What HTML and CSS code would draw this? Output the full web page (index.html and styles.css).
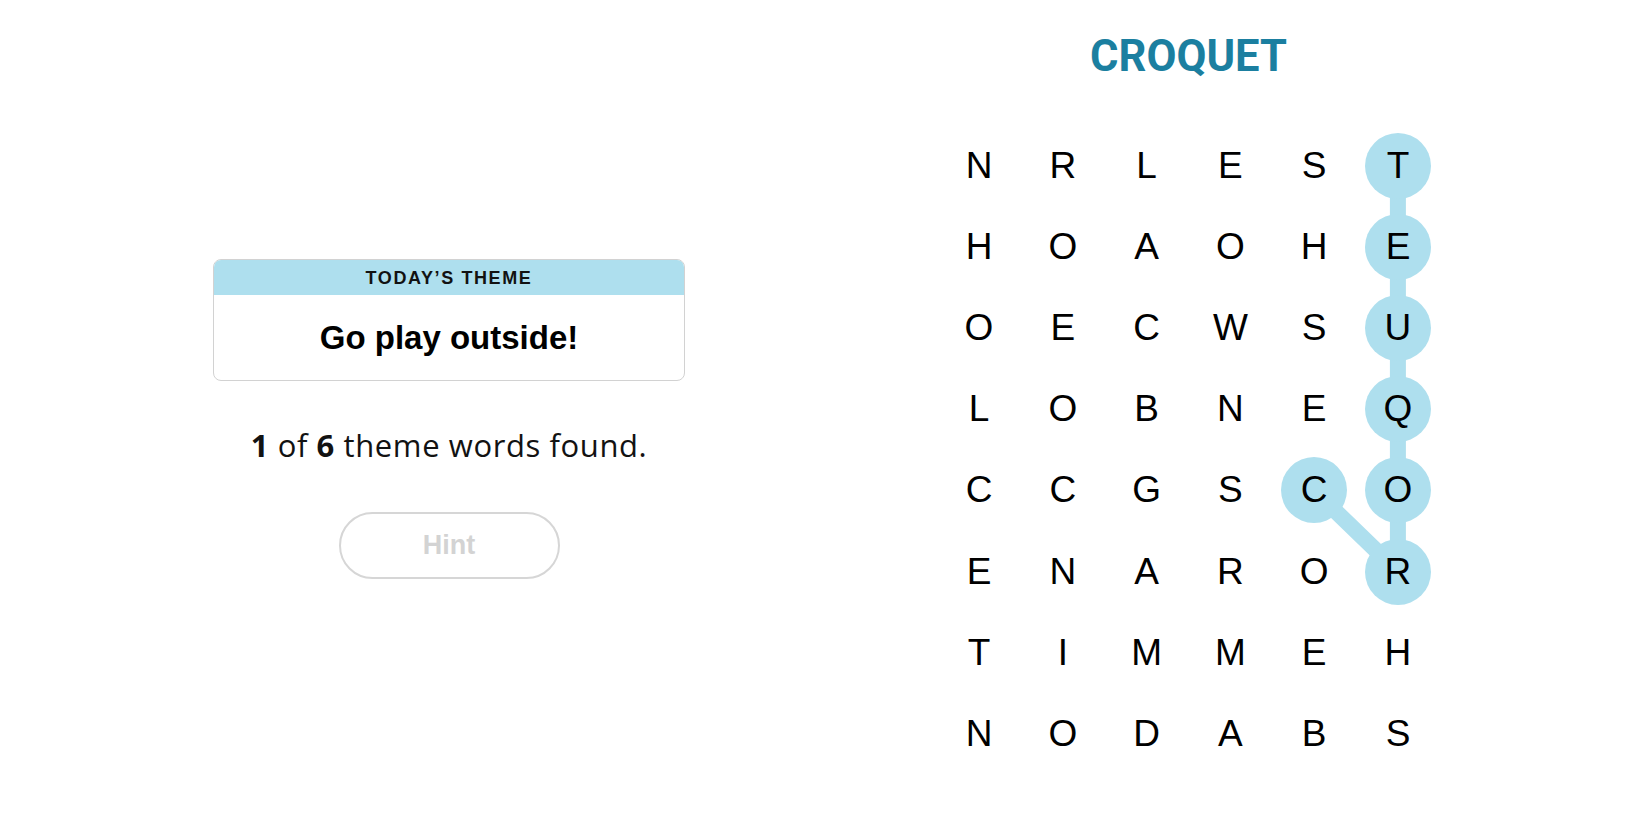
FILE: index.html
```html
<!DOCTYPE html>
<html lang="en">
<head>
<meta charset="utf-8">
<title>Strands</title>
<link rel="stylesheet" href="styles.css">
</head>
<body>
<main class="page">
  <section class="left">
    <div class="theme-card">
      <div class="theme-head">TODAY’S THEME</div>
      <div class="theme-body">Go play outside!</div>
    </div>
    <p class="progress"><b>1</b> of <b>6</b> theme words found.</p>
    <button class="hint" type="button">Hint</button>
  </section>
  <section class="right">
    <h1 class="word">CROQUET</h1>
    <div class="board">
      <svg class="links" width="503" height="650" viewBox="0 0 503 650" aria-hidden="true">
        <line x1="460.9" y1="40.6" x2="460.9" y2="446.6" stroke="#aedfee" stroke-width="16" stroke-linecap="round"/>
        <line x1="377.1" y1="365.4" x2="460.9" y2="446.6" stroke="#aedfee" stroke-width="16" stroke-linecap="round"/>
      </svg>
      <div class="cell"><span>N</span></div><div class="cell"><span>R</span></div><div class="cell"><span>L</span></div><div class="cell"><span>E</span></div><div class="cell"><span>S</span></div><div class="cell found"><span>T</span></div>
      <div class="cell"><span>H</span></div><div class="cell"><span>O</span></div><div class="cell"><span>A</span></div><div class="cell"><span>O</span></div><div class="cell"><span>H</span></div><div class="cell found"><span>E</span></div>
      <div class="cell"><span>O</span></div><div class="cell"><span>E</span></div><div class="cell"><span>C</span></div><div class="cell"><span>W</span></div><div class="cell"><span>S</span></div><div class="cell found"><span>U</span></div>
      <div class="cell"><span>L</span></div><div class="cell"><span>O</span></div><div class="cell"><span>B</span></div><div class="cell"><span>N</span></div><div class="cell"><span>E</span></div><div class="cell found"><span>Q</span></div>
      <div class="cell"><span>C</span></div><div class="cell"><span>C</span></div><div class="cell"><span>G</span></div><div class="cell"><span>S</span></div><div class="cell found"><span>C</span></div><div class="cell found"><span>O</span></div>
      <div class="cell"><span>E</span></div><div class="cell"><span>N</span></div><div class="cell"><span>A</span></div><div class="cell"><span>R</span></div><div class="cell"><span>O</span></div><div class="cell found"><span>R</span></div>
      <div class="cell"><span>T</span></div><div class="cell"><span>I</span></div><div class="cell"><span>M</span></div><div class="cell"><span>M</span></div><div class="cell"><span>E</span></div><div class="cell"><span>H</span></div>
      <div class="cell"><span>N</span></div><div class="cell"><span>O</span></div><div class="cell"><span>D</span></div><div class="cell"><span>A</span></div><div class="cell"><span>B</span></div><div class="cell"><span>S</span></div>
    </div>
  </section>
</main>
</body>
</html>
```

FILE: styles.css
```css
html, body {
  margin: 0;
  padding: 0;
  background: #ffffff;
}

body {
  font-family: "Liberation Sans", Arial, sans-serif;
  color: #000000;
}

.page {
  display: flex;
  width: 1650px;
  height: 825px;
}

.left {
  width: 898px;
  display: flex;
  flex-direction: column;
  align-items: center;
  padding-top: 259px;
  box-sizing: border-box;
}

.theme-card {
  width: 472px;
  height: 122px;
  box-sizing: border-box;
  border: 1px solid #d2d2d2;
  border-radius: 8px;
  overflow: hidden;
  display: flex;
  flex-direction: column;
}

.theme-head {
  height: 35px;
  padding-top: 2px;
  box-sizing: border-box;
  background: #aedfee;
  display: flex;
  align-items: center;
  justify-content: center;
  font-size: 18px;
  font-weight: 700;
  letter-spacing: 1.6px;
  color: #121212;
}

.theme-body {
  flex: 1;
  display: flex;
  align-items: center;
  justify-content: center;
  font-size: 33px;
  font-weight: 700;
  color: #000;
}

.progress {
  margin: 44px 0 0;
  height: 40px;
  line-height: 40px;
  font-family: "Open Sans", "Liberation Sans", sans-serif;
  font-size: 31px;
  letter-spacing: 0.6px;
  color: #121212;
}

.progress b {
  font-weight: 700;
}

.hint {
  margin-top: 47px;
  width: 221px;
  height: 67px;
  box-sizing: border-box;
  border: 2px solid #d6d6d6;
  border-radius: 34px;
  background: #ffffff;
  font-family: "Liberation Sans", Arial, sans-serif;
  font-size: 27px;
  font-weight: 700;
  color: #d3d3d3;
  padding: 0;
}

.right {
  margin-left: 39px;
  width: 503px;
  display: flex;
  flex-direction: column;
  align-items: center;
  padding-top: 32px;
}

.word {
  margin: 0;
  height: 50px;
  line-height: 50px;
  font-family: Roboto, "Liberation Sans", sans-serif;
  font-size: 43.5px;
  font-weight: 700;
  color: #1b7fa0;
}

.board {
  position: relative;
  margin-top: 43px;
  display: grid;
  grid-template-columns: repeat(6, 83.8px);
  grid-template-rows: repeat(8, 81.2px);
}

.links {
  position: absolute;
  left: 0;
  top: 0;
  z-index: 0;
}

.cell {
  position: relative;
  z-index: 1;
  display: flex;
  align-items: center;
  justify-content: center;
}

.cell span {
  width: 66px;
  height: 66px;
  border-radius: 50%;
  display: flex;
  align-items: center;
  justify-content: center;
  font-size: 37px;
  color: #000000;
}

.cell.found span {
  background: #aedfee;
}
```
